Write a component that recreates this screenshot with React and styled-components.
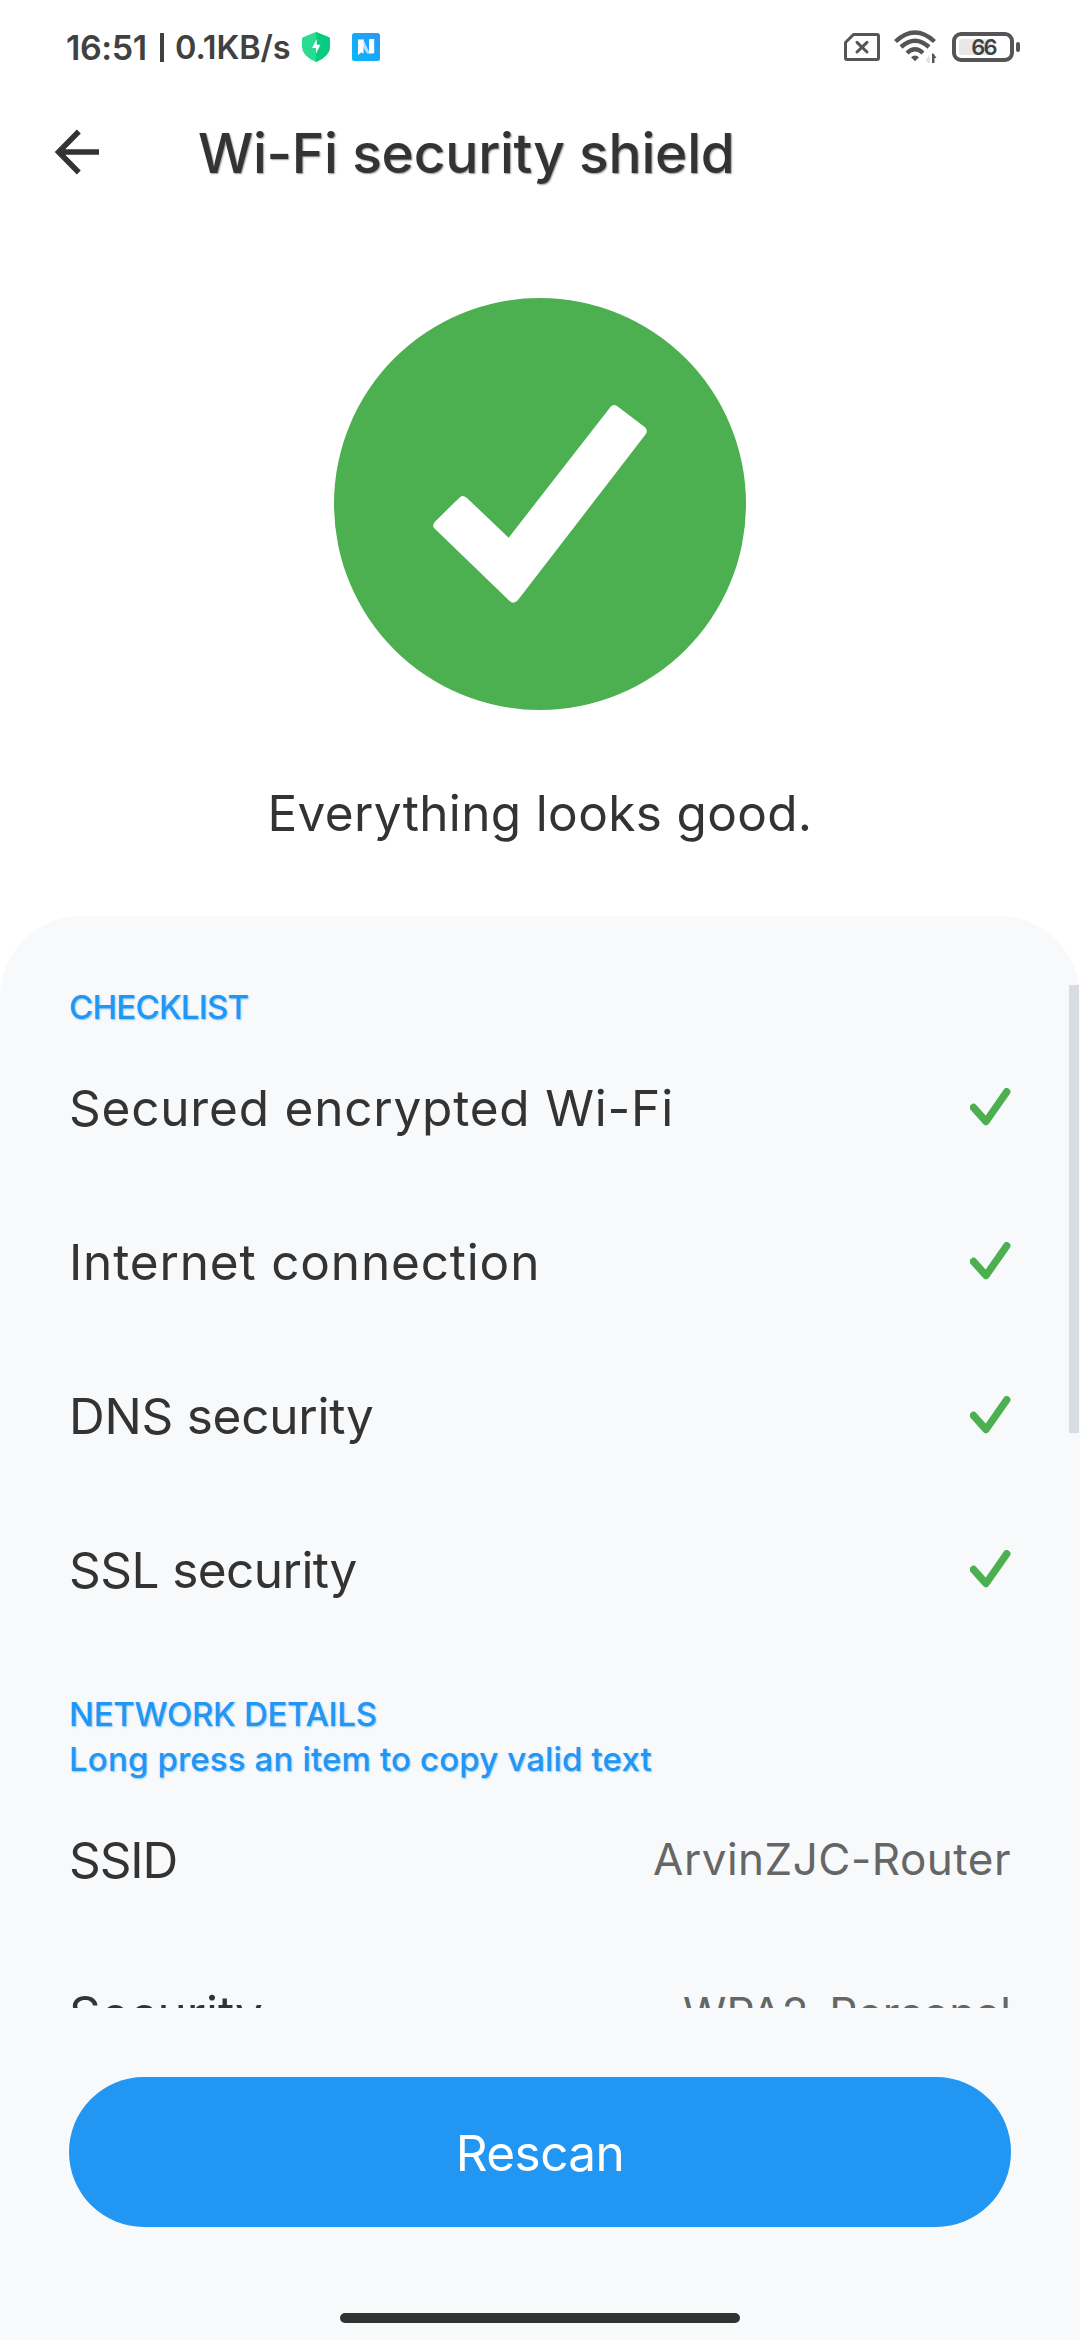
import React from "react";
import styled, { createGlobalStyle } from "styled-components";

const GlobalStyle = createGlobalStyle`
  * { box-sizing: border-box; }
  body {
    margin: 0;
    background: #fff;
    font-family: Inter, "Noto Sans", sans-serif;
    color: #333;
  }
`;

const Screen = styled.div`
  width: 1080px;
  height: 2340px;
  display: flex;
  flex-direction: column;
  overflow: hidden;
  background: #fff;
`;

const StatusBar = styled.header`
  height: 94px;
  flex: none;
  display: flex;
  align-items: center;
  padding: 0 60px 0 66px;
  color: #414141;
`;

const StatusText = styled.span`
  font-size: ${(p) => p.$size}px;
  line-height: 46px;
  padding-top: 2px;
  font-weight: 600;
  letter-spacing: ${(p) => p.$track}px;
  white-space: nowrap;
  width: ${(p) => p.$width}px;
`;

const StatusDivider = styled.span`
  width: 4px;
  height: 29px;
  margin-right: 11px;
  background: #414141;
`;

const StatusIcons = styled.div`
  display: flex;
  align-items: center;
  gap: ${(p) => p.$gap}px;
  margin-left: ${(p) => p.$left};
`;

const Battery = styled.div`
  display: flex;
  align-items: center;
  gap: 2px;
`;

const BatteryCase = styled.div`
  width: 62px;
  height: 30px;
  padding: 3px;
  border: 4px solid #555;
  border-radius: 9px;
`;

const BatteryLevel = styled.div`
  height: 16px;
  width: 100%;
  border-radius: 2px;
  background: linear-gradient(90deg, #e8e8e8 66%, transparent 66%);
  font-size: 22px;
  line-height: 16px;
  font-weight: 600;
  letter-spacing: -1.8px;
  text-align: center;
  padding-left: 1px;
  color: #414141;
`;

const BatteryTip = styled.div`
  width: 4px;
  height: 10px;
  border-radius: 2px;
  background: #555;
`;

const AppBar = styled.div`
  height: 116px;
  flex: none;
  display: flex;
  align-items: center;
  padding-left: 52px;
`;

const Title = styled.h1`
  margin: 0 0 0 96px;
  padding-top: 1px;
  font-size: 55px;
  line-height: 76px;
  font-weight: 500;
  letter-spacing: -0.2px;
  text-shadow: 1px 1px 1.5px rgba(51, 51, 51, 0.5);
  white-space: nowrap;
`;

const Hero = styled.section`
  height: 706px;
  flex: none;
  display: flex;
  flex-direction: column;
  align-items: center;
  padding-top: 88px;
`;

const Message = styled.p`
  margin: 73px 0 0;
  font-size: 49.5px;
  line-height: 60px;
  letter-spacing: 0.35px;
  white-space: nowrap;
`;

const Panel = styled.main`
  flex: 1;
  display: flex;
  flex-direction: column;
  background: #f7f9fb;
  border-radius: 82px 82px 0 0;
`;

const ScrollArea = styled.div`
  position: relative;
  height: 1092px;
  padding: 69px 69px 0;
  overflow: hidden;
`;

const ScrollThumb = styled.div`
  position: absolute;
  top: 69px;
  right: 1px;
  width: 10px;
  height: 448px;
  background: #d9dce1;
`;

const Section = styled.section`
  margin-bottom: 46px;
`;

const SectionLabel = styled.div`
  height: 45px;
  font-size: 33px;
  line-height: 45px;
  font-weight: 500;
  letter-spacing: ${(p) => p.$track}px;
  color: #2196f3;
  text-shadow: 1px 1px 1.5px rgba(33, 150, 243, 0.5);
  white-space: nowrap;
`;

const Row = styled.div`
  height: 154px;
  display: flex;
  align-items: center;
  justify-content: space-between;
`;

const RowLabel = styled.span`
  padding-top: 1px;
  font-size: 49.5px;
  line-height: 60px;
  letter-spacing: ${(p) => p.$track}px;
  white-space: nowrap;
`;

const RowValue = styled.span`
  font-size: 44px;
  line-height: 60px;
  letter-spacing: ${(p) => p.$track}px;
  color: #666;
  white-space: nowrap;
`;

const Footer = styled.footer`
  flex: 1;
  display: flex;
  flex-direction: column;
  align-items: center;
  justify-content: space-between;
  padding: 69px 69px 17px;
`;

const RescanButton = styled.button`
  width: 100%;
  height: 150px;
  border: 0;
  padding: 1px 0 0;
  border-radius: 75px;
  background: #2196f3;
  color: #fff;
  font: 400 49.5px/60px Inter, "Noto Sans", sans-serif;
  letter-spacing: -0.6px;
`;

const HomeIndicator = styled.div`
  width: 400px;
  height: 10px;
  border-radius: 5px;
  background: #303332;
`;

const ShieldIcon = () => (
  <svg width="28" height="30" viewBox="0 0 28 30">
    <path d="M14 0 27 5.2Q28 5.6 28 7V15Q28 24 14 30Q0 24 0 15V7Q0 5.6 1 5.2Z" fill="#2adb92" />
    <path d="M14 0 27 5.2Q28 5.6 28 7V15Q28 24 14 30Z" fill="#06cb80" />
    <path d="M14.8 7 10 16h4v5.5l4.5-8.7h-3.7z" fill="#fff" />
  </svg>
);

const NoteIcon = () => (
  <svg width="28" height="28" viewBox="0 0 28 28">
    <defs>
      <linearGradient id="note" x1="0" y1="1" x2="1" y2="0">
        <stop offset="0" stopColor="#08b8fa" />
        <stop offset="1" stopColor="#2b96f7" />
      </linearGradient>
    </defs>
    <rect width="28" height="28" rx="2.5" fill="url(#note)" />
    <path d="M11 6 18 20.5H15L10.5 13Z" fill="#b5e0fd" />
    <path d="M6 6.5h5.5v14l-2.2-1L6 22z" fill="#fff" />
    <path d="M17 7q0-1 1-1h4.2v13.3q0 1.2-1.2 1.2h-4z" fill="#fff" />
  </svg>
);

const SimIcon = () => (
  <svg width="36" height="28" viewBox="0 0 36 28" fill="none" stroke="#555" strokeWidth="3">
    <path d="M9.5 1.5H33Q34.5 1.5 34.5 3V25Q34.5 26.5 33 26.5H3Q1.5 26.5 1.5 25V9.5Z" strokeLinejoin="round" />
    <path d="M13 9.3 23 19M23 9.3 13 19" strokeLinecap="round" />
  </svg>
);

const WifiIcon = () => (
  <svg width="44" height="34" viewBox="0 0 44 34" fill="none" stroke="#555" strokeWidth="4.4">
    <path d="M1.5 11.5Q21 -6.5 40.5 11.5" />
    <path d="M7 17Q21 4.5 35 17" />
    <path d="M13 23Q21 15.5 29 23" />
    <path d="M17 27.3Q21 23.5 25 27.3L21 31.2Z" fill="#555" stroke="none" />
    <path d="M35.5 24v9h-1.5l-2.5-4.5h2z" fill="#ddd" stroke="none" />
    <path d="M38 33v-9.5h1.5l3 4.5h-2v5z" fill="#555" stroke="none" />
  </svg>
);

const BackIcon = () => (
  <svg width="50" height="50" viewBox="52 127 50 50" fill="none" stroke="#333" strokeWidth="5.5">
    <path d="M78.8 131.5 58.6 152 78.8 172.5M58.6 152H99" />
  </svg>
);

const HeroIcon = () => (
  <svg width="412" height="412" viewBox="42 54 1236 1236">
    <circle cx="660" cy="672" r="618" fill="#4caf50" />
    <path
      d="M872 380Q880 371 891 378L974 441Q985 450 977 463L594 960Q580 975 568 962L346 748Q334 740 344 726L418 653Q427 643 440 653L566 773Z"
      fill="#fff"
    />
  </svg>
);

const TickIcon = () => (
  <svg width="41" height="38" viewBox="970 1087.5 41 38" fill="none">
    <path d="M973.5 1107 986 1121 1006.7 1091.3" stroke="#4caf50" strokeWidth="7.4" strokeLinecap="round" strokeLinejoin="round" />
  </svg>
);

const checks = [
  { label: "Secured encrypted Wi-Fi", track: 0.8 },
  { label: "Internet connection", track: 0.83 },
  { label: "DNS security", track: -0.25 },
  { label: "SSL security", track: -0.55 },
];

const details = [
  { label: "SSID", track: -1.1, value: "ArvinZJC-Router", valueTrack: 0.5 },
  { label: "Security", track: -0.1, value: "WPA2-Personal", valueTrack: 0.1 },
];

export default function App() {
  return (
    <Screen>
      <GlobalStyle />
      <StatusBar>
        <StatusText $size={34} $track={-0.4} $width={94}>16:51</StatusText>
        <StatusDivider />
        <StatusText $size={32.5} $track={-0.1} $width={127}>0.1KB/s</StatusText>
        <StatusIcons $gap={22} $left="0">
          <ShieldIcon />
          <NoteIcon />
        </StatusIcons>
        <StatusIcons $gap={14} $left="auto">
          <SimIcon />
          <WifiIcon />
          <Battery>
            <BatteryCase>
              <BatteryLevel>66</BatteryLevel>
            </BatteryCase>
            <BatteryTip />
          </Battery>
        </StatusIcons>
      </StatusBar>
      <AppBar>
        <BackIcon />
        <Title>Wi-Fi security shield</Title>
      </AppBar>
      <Hero>
        <HeroIcon />
        <Message>Everything looks good.</Message>
      </Hero>
      <Panel>
        <ScrollArea>
          <Section>
            <SectionLabel $track={-0.75}>CHECKLIST</SectionLabel>
            {checks.map((c) => (
              <Row key={c.label}>
                <RowLabel $track={c.track}>{c.label}</RowLabel>
                <TickIcon />
              </Row>
            ))}
          </Section>
          <Section>
            <SectionLabel $track={-0.3}>NETWORK DETAILS</SectionLabel>
            <SectionLabel $track={0.15}>Long press an item to copy valid text</SectionLabel>
            {details.map((d) => (
              <Row key={d.label}>
                <RowLabel $track={d.track}>{d.label}</RowLabel>
                <RowValue $track={d.valueTrack}>{d.value}</RowValue>
              </Row>
            ))}
          </Section>
          <ScrollThumb />
        </ScrollArea>
        <Footer>
          <RescanButton>Rescan</RescanButton>
          <HomeIndicator />
        </Footer>
      </Panel>
    </Screen>
  );
}
